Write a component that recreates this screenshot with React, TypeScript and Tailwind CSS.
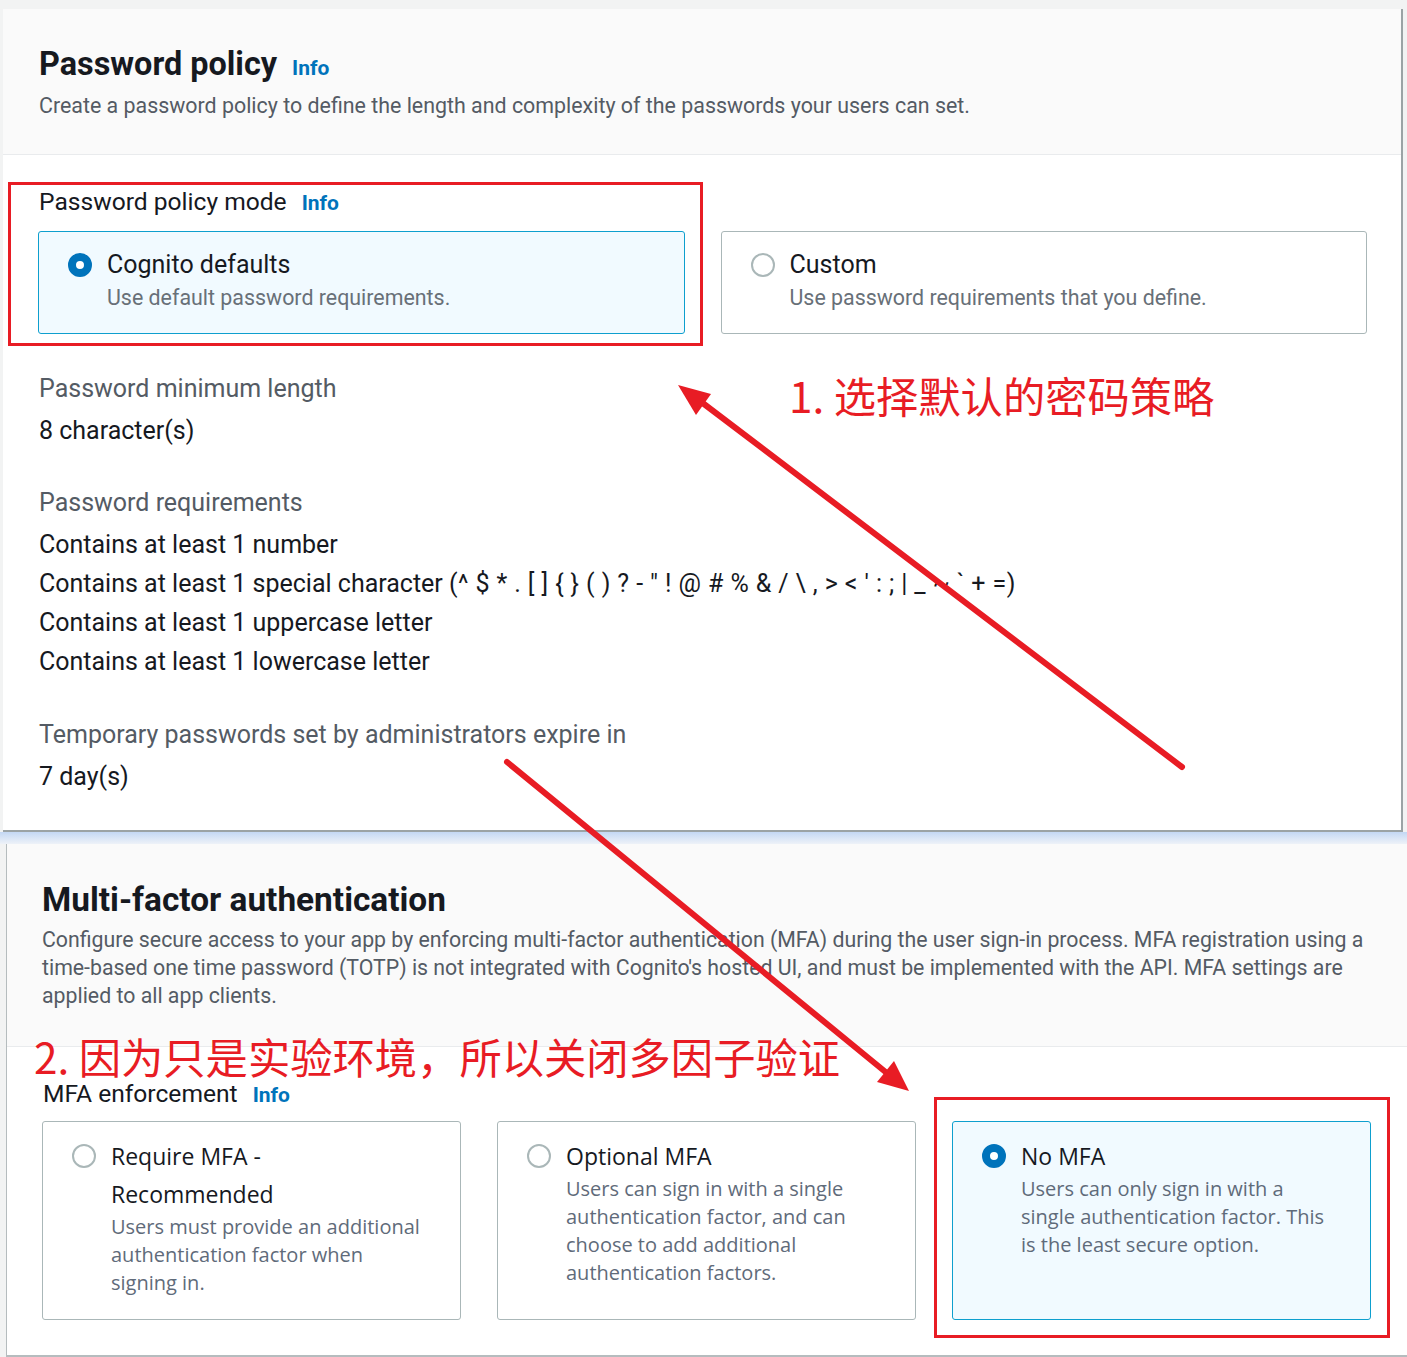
const ember = "font-['Roboto',sans-serif]";

function Info() {
  return (
    <span className={`${ember} text-[21px] font-bold text-[#0073bb]`}>Info</span>
  );
}

function Radio({ checked }: { checked?: boolean }) {
  if (checked) {
    return (
      <span className="block h-[24px] w-[24px] shrink-0 rounded-full border-[8px] border-[#0073bb] bg-white" />
    );
  }
  return (
    <span className="block h-[24px] w-[24px] shrink-0 rounded-full border-2 border-[#aab7b8] bg-white" />
  );
}

function PolicyTile({
  title,
  text,
  checked,
}: {
  title: string;
  text: string;
  checked?: boolean;
}) {
  return (
    <div
      className={
        checked
          ? "flex gap-[15px] rounded-[3px] border border-[#0e9fce] bg-[#f1faff] pl-[29px] pt-[16px] pb-[19px]"
          : "flex gap-[15px] rounded-[3px] border border-[#aab7b8] bg-white pl-[29px] pt-[16px] pb-[19px]"
      }
    >
      <div className="mt-[5px]">
        <Radio checked={checked} />
      </div>
      <div>
        <div className="text-[25px] leading-[34px] text-[#16191f]">{title}</div>
        <div className="text-[21.4px] leading-[32px] text-[#687078]">{text}</div>
      </div>
    </div>
  );
}

function MfaTile({
  title,
  text,
  checked,
}: {
  title: string;
  text: string;
  checked?: boolean;
}) {
  return (
    <div
      className={
        checked
          ? "flex gap-[15px] rounded-[3px] border border-[#0e9fce] bg-[#f1faff] pl-[29px] pt-[15px] pb-[22px] font-['Open_Sans',sans-serif]"
          : "flex gap-[15px] rounded-[3px] border border-[#aab7b8] bg-white pl-[29px] pt-[15px] pb-[22px] font-['Open_Sans',sans-serif]"
      }
    >
      <div className="mt-[7px]">
        <Radio checked={checked} />
      </div>
      <div className="w-[318px]">
        <div className="text-[23px] leading-[38px] text-[#16191f]">{title}</div>
        <div className="text-[20px] leading-[28px] text-[#5f6b7a]">{text}</div>
      </div>
    </div>
  );
}

export default function App() {
  return (
    <div className={`${ember} relative min-h-screen w-[1407px] overflow-hidden bg-[#f2f3f3] pt-[9px]`}>
      {/* Password policy panel */}
      <section className="ml-[3px] w-[1400px] border-r-2 border-b-2 border-[#9ba3a5] bg-white">
        <header className="border-b border-[#e9ebed] bg-[#fafafa] px-[36px] pt-[35px] pb-[33px]">
          <div className="flex items-baseline gap-[15px]">
            <h2 className="text-[32.4px] font-bold leading-[40px] text-[#16191f]">Password policy</h2>
            <Info />
          </div>
          <p className="mt-[6px] text-[21.4px] leading-[30px] text-[#545b64]">
            Create a password policy to define the length and complexity of the passwords your users can set.
          </p>
        </header>

        <div className="px-[35px] pt-[31px] pb-[34px]">
          <div className="mb-[12px] flex items-baseline gap-[15px]">
            <span className="pl-[1px] text-[24.6px] leading-[32px] text-[#16191f]">Password policy mode</span>
            <Info />
          </div>

          <div className="grid w-[1329px] grid-cols-2 gap-[36px]">
            <PolicyTile title="Cognito defaults" text="Use default password requirements." checked />
            <PolicyTile title="Custom" text="Use password requirements that you define." />
          </div>

          <div className="mt-[35px] pl-[1px] text-[25px] leading-[39px]">
            <div className="text-[#545b64]">Password minimum length</div>
            <div className="mt-[3px] text-[#16191f]">8 character(s)</div>
          </div>

          <div className="mt-[33px] pl-[1px] text-[25px] leading-[39px]">
            <div className="text-[#545b64]">Password requirements</div>
            <div className="mt-[3px] text-[#16191f]">
              <div>Contains at least 1 number</div>
              <div>
                Contains at least 1 special character{" "}
                <span className="tracking-[0.4px]">
                  (^ $ * . [ ] {"{"} {"}"} ( ) ? - " ! @ # % &amp; / \ , &gt; &lt; ' : ; | _ ~ ` + =)
                </span>
              </div>
              <div>Contains at least 1 uppercase letter</div>
              <div>Contains at least 1 lowercase letter</div>
            </div>
          </div>

          <div className="mt-[34px] pl-[1px] text-[25px] leading-[39px]">
            <div className="text-[#545b64]">Temporary passwords set by administrators expire in</div>
            <div className="mt-[3px] text-[#16191f]">7 day(s)</div>
          </div>
        </div>
      </section>

      <div className="h-[12px] bg-gradient-to-b from-[#c4d8f4] to-[#eef2f8]" />

      {/* MFA panel */}
      <section className="ml-[6px] border-l border-b-2 border-[#b5bcbe] bg-white">
        <header className="border-b border-[#e9ebed] bg-[#fafafa] pl-[35px] pr-[28px] pt-[36px] pb-[36px]">
          <h2 className="text-[33.4px] font-bold leading-[40px] text-[#16191f]">Multi-factor authentication</h2>
          <p className="mt-[6px] text-[21.3px] leading-[28px] text-[#545b64]">
            Configure secure access to your app by enforcing multi-factor authentication (MFA) during the user sign-in process. MFA registration using a time-based one time password (TOTP) is not integrated with Cognito's hosted UI, and must be implemented with the API. MFA settings are applied to all app clients.
          </p>
        </header>

        <div className="px-[35px] pt-[31px] pb-[35px]">
          <div className="mb-[9px] flex items-baseline gap-[15px]">
            <span className="pl-[1px] text-[24.6px] leading-[32px] text-[#16191f]">MFA enforcement</span>
            <Info />
          </div>
          <div className="grid w-[1329px] grid-cols-3 gap-[36px]">
            <MfaTile
              title="Require MFA - Recommended"
              text="Users must provide an additional authentication factor when signing in."
            />
            <MfaTile
              title="Optional MFA"
              text="Users can sign in with a single authentication factor, and can choose to add additional authentication factors."
            />
            <MfaTile
              title="No MFA"
              text="Users can only sign in with a single authentication factor. This is the least secure option."
              checked
            />
          </div>
        </div>
      </section>

      {/* annotations */}
      <div className="pointer-events-none absolute left-[8px] top-[182px] h-[164px] w-[695px] border-[3px] border-[#e81c24]" />
      <div className="pointer-events-none absolute left-[934px] top-[1097px] h-[241px] w-[456px] border-[3px] border-[#e81c24]" />

      <div className="pointer-events-none absolute left-[789px] top-[376px] font-['Noto_Sans_CJK_SC',sans-serif] text-[42.3px] leading-[38px] text-[#e81c24]">
        1. 选择默认的密码策略
      </div>
      <div className="pointer-events-none absolute left-[34px] top-[1037px] font-['Noto_Sans_CJK_SC',sans-serif] text-[42.3px] leading-[38px] text-[#e81c24]">
        2. 因为只是实验环境，所以关闭多因子验证
      </div>

      <svg className="pointer-events-none absolute left-0 top-0" width="1407" height="1357">
        <line x1="1182" y1="767" x2="700" y2="401" stroke="#e81c24" strokeWidth="6" strokeLinecap="round" />
        <polygon points="678,385 711,394 696,415" fill="#e81c24" />
        <line x1="507" y1="762" x2="888" y2="1074" stroke="#e81c24" strokeWidth="6" strokeLinecap="round" />
        <polygon points="909,1091 877,1082 894,1061" fill="#e81c24" />
      </svg>
    </div>
  );
}
